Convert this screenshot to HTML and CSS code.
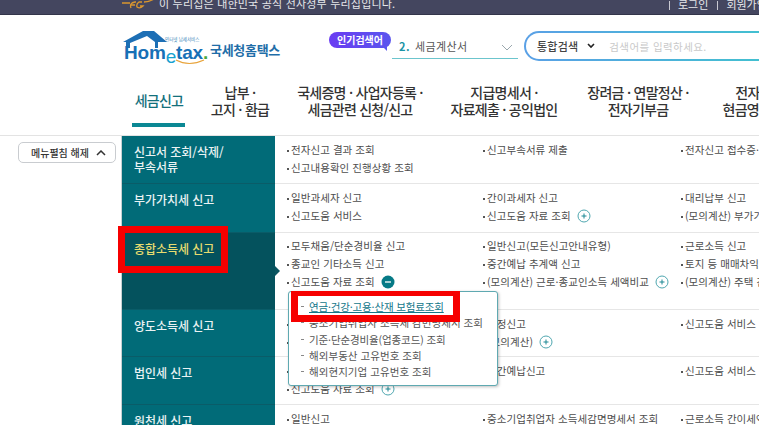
FILE: index.html
```html
<!DOCTYPE html>
<html lang="ko">
<head>
<meta charset="utf-8">
<title>홈택스</title>
<link rel="stylesheet" href="styles.css">
</head>
<body>
<div class="page">
  <div class="topbar">
    <svg class="eg" width="32" height="10" viewBox="0 0 32 10"><path d="M0 4H8M22 3Q27 3 32 0M9 9Q7 4 13 3H14M8.500 6H13M20 3H17Q14 5 15 8Q18 10 21 7H18" fill="none" stroke="#d9962f" stroke-width="1.300"/></svg>
    <span class="notice">이 누리집은 대한민국 공식 전자정부 누리집입니다.</span>
    <span class="toplinks"><a>로그인</a><a>회원가입</a></span>
  </div>
  <header class="head">
    <div class="logo">
      <svg class="house" width="46" height="17" viewBox="0 0 46 17"><path d="M0 11 20 0H31L44 11H35V17H32V11L24 5 7 12V17H3V11Z" fill="#1d6fb5"/></svg>
      <span class="logo-small">인터넷 납세서비스</span>
      <span class="logo-word">Hom<span class="logo-e">e</span>tax<span class="logo-dot">.</span></span>
      <svg class="swoosh" width="30" height="6" viewBox="0 0 30 6"><path d="M1 1Q14 8 29 1" fill="none" stroke="#e8a33a" stroke-width="1.200"/></svg>
      <span class="logo-ko">국세청홈택스</span>
    </div>
    <div class="popular">인기검색어</div>
    <div class="rank"><b>2.</b><span>세금계산서</span>
      <svg class="rank-arrow" width="12" height="7" viewBox="0 0 12 7"><path d="M1 1 6 6 11 1" fill="none" stroke="#9aa7ad"/></svg>
    </div>
    <div class="search">
      <span class="search-in">
        <span class="scope">통합검색</span>
        <svg class="scope-arrow" width="8" height="6" viewBox="0 0 8 6"><path d="M1 1 4 4 7 1" fill="none" stroke="#222" stroke-width="1.600"/></svg>
        <span class="ph">검색어를 입력하세요.</span>
      </span>
    </div>
  </header>
  <nav class="nav">
    <a class="tab w1 on">세금신고</a>
    <a class="tab w2">납부 ·<br>고지 · 환급</a>
    <a class="tab w3">국세증명 · 사업자등록 ·<br>세금관련 신청/신고</a>
    <a class="tab w4">지급명세서 ·<br>자료제출 · 공익법인</a>
    <a class="tab w5">장려금 · 연말정산 ·<br>전자기부금</a>
    <a class="tab w6">전자(세금)계산서<br>현금영수증 · 신용카드</a>
  </nav>
  <main class="body">
    <aside class="side">
      <button class="fold">메뉴펼침 해제
        <svg width="10" height="6" viewBox="0 0 10 6"><path d="M1 5 5 1 9 5" fill="none" stroke="#333" stroke-width="1.500"/></svg>
      </button>
    </aside>
    <section class="table">
      <div class="row r1">
        <h3 class="label two">신고서 조회/삭제/<br>부속서류</h3>
        <ul class="cells">
          <li>전자신고 결과 조회</li><li>신고부속서류 제출</li><li>전자신고 접수증·납부서 조회</li>
          <li>신고내용확인 진행상황 조회</li>
        </ul>
      </div>
      <div class="row r2">
        <h3 class="label">부가가치세 신고</h3>
        <ul class="cells">
          <li>일반과세자 신고</li><li>간이과세자 신고</li><li>대리납부 신고</li>
          <li>신고도움 서비스</li><li>신고도움 자료 조회<svg class="ico" viewBox="0 0 14 14"><use href="#plus"/></svg></li><li>(모의계산) 부가가치세</li>
        </ul>
      </div>
      <div class="row r3 active">
        <h3 class="label">종합소득세 신고</h3>
        <i class="pointer"></i>
        <ul class="cells">
          <li>모두채움/단순경비율 신고</li><li>일반신고(모든신고안내유형)</li><li>근로소득 신고</li>
          <li>종교인 기타소득 신고</li><li>중간예납 추계액 신고</li><li>토지 등 매매차익 신고</li>
          <li>신고도움 자료 조회<svg class="ico" viewBox="0 0 14 14"><circle cx="7" cy="7" r="6.500" fill="#067a86"/><path d="M4 7H10" stroke="#fff" stroke-width="1.300"/></svg></li><li>(모의계산) 근로·종교인소득 세액비교<svg class="ico" viewBox="0 0 14 14"><use href="#plus"/></svg></li><li>(모의계산) 주택 간주임대료</li>
        </ul>
      </div>
      <div class="row r4">
        <h3 class="label">양도소득세 신고</h3>
        <ul class="cells">
          <li>예정신고</li><li>확정신고</li><li>신고도움 서비스</li>
          <li>주식등 양도</li><li>(모의계산)<svg class="ico" viewBox="0 0 14 14"><use href="#plus"/></svg></li>
        </ul>
      </div>
      <div class="row r5">
        <h3 class="label">법인세 신고</h3>
        <ul class="cells">
          <li>정기신고</li><li>중간예납신고</li><li>신고도움 서비스</li>
          <li>신고도움 자료 조회<svg class="ico" viewBox="0 0 14 14"><use href="#plus"/></svg></li>
        </ul>
      </div>
      <div class="row r6">
        <h3 class="label">원천세 신고</h3>
        <ul class="cells">
          <li>일반신고</li><li>중소기업취업자 소득세감면명세서 조회</li><li>근로소득 간이세액표</li>
        </ul>
      </div>
    </section>
    <div class="popup">
      <a class="pop-link">연금·건강·고용·산재 보험료조회</a>
      <a>중소기업취업자 소득세 감면명세서 조회</a>
      <a class="tight">기준·단순경비율(업종코드) 조회</a>
      <a>해외부동산 고유번호 조회</a>
      <a>해외현지기업 고유번호 조회</a>
    </div>
    <div class="mark mark-side"></div>
    <div class="mark mark-pop"></div>
  </main>
  <svg class="defs" width="0" height="0"><symbol id="plus" viewBox="0 0 14 14"><circle cx="7" cy="7" r="6" fill="#fff" stroke="#4fa7b0"/><path d="M4.500 7H9.500M7 4.500V9.500" stroke="#1b8793"/></symbol></svg>
</div>
</body>
</html>
```
FILE: styles.css
```css
* { box-sizing: border-box; }
html, body { margin: 0; padding: 0; background: #fff; }
body { font-family: "Noto Sans CJK KR", "Noto Sans", sans-serif; color: #444; overflow: hidden; }
a { color: inherit; text-decoration: none; }
ul { list-style: none; margin: 0; padding: 0; }
h3 { margin: 0; }
.page { position: relative; width: 759px; height: 425px; overflow: hidden; background: #fff; }
.defs { position: absolute; }

.topbar { height: 15px; background: #44465f; border-bottom: 1px solid #33354a; display: flex; align-items: flex-end; padding-left: 122px; overflow: hidden; color: #e6e6ea; font-size: 11px; line-height: 14px; }
.eg { flex: none; margin-bottom: 5px; }
.notice { margin-left: 5px; margin-bottom: 4px; letter-spacing: .2px; white-space: nowrap; }
.toplinks { margin-left: auto; display: flex; margin-bottom: 4px; white-space: nowrap; width: 90px; flex: none; }
.toplinks a { border-left: 1px solid #c9c9d2; padding-left: 8px; margin-right: 9px; height: 9px; line-height: 6px; }
.toplinks a + a { flex: none; }

.head { position: relative; height: 68px; display: flex; align-items: flex-start; padding: 17px 0 0 122px; }
.logo { position: relative; width: 207px; height: 34px; flex: none; }
.house { position: absolute; left: 1px; top: -1px; }
.logo-small { position: absolute; left: 43px; top: 4px; font-size: 4.500px; line-height: 6px; color: #3a86b8; white-space: nowrap; }
.logo-word { position: absolute; left: 2px; top: 10px; font: 700 19px/22px "Liberation Sans", sans-serif; letter-spacing: -.2px; color: #1770b6; white-space: nowrap; }
.logo-e { color: #16a0cf; position: relative; top: 4px; font-weight: 400; }
.logo-dot { color: #4aa83c; }
.swoosh { position: absolute; left: 53px; top: 27px; }
.logo-ko { position: absolute; left: 88px; top: 9px; font-size: 13px; line-height: 18px; font-weight: 700; color: #1f6ea8; letter-spacing: -.3px; white-space: nowrap; }
.popular { position: relative; flex: none; width: 62px; height: 16px; border-radius: 8px; background: linear-gradient(90deg, #6a3df2, #5a55ee); color: #fff; font-size: 10px; line-height: 15px; font-weight: 700; text-align: center; white-space: nowrap; }
.popular::after { content: ""; position: absolute; right: 4px; bottom: -3px; border-left: 4px solid transparent; border-top: 4px solid #5a55ee; }
.rank { flex: none; width: 126px; height: 23px; margin: 4px 0 0 1px; padding: 1px 0 0 7px; border-bottom: 1px solid #6cc5cd; display: flex; align-items: flex-start; font-size: 11px; line-height: 18px; letter-spacing: .4px; color: #555; }
.rank b { color: #1b94a6; margin-right: 5px; }
.rank-arrow { margin: 7px 0 0 auto; margin-right: 5px; }
.search { flex: none; width: 240px; height: 30px; margin: -1px 0 0 6px; padding: 2px 0 2px 2px; border-radius: 15px 0 0 15px; background: linear-gradient(90deg, #5aa0e6, #42c0d0); }
.search-in { display: flex; align-items: center; height: 26px; padding-left: 11px; background: #fff; border-radius: 13px 0 0 13px; font-size: 10.500px; white-space: nowrap; overflow: hidden; }
.scope { color: #444; font-weight: 500; font-size: 11px; letter-spacing: .2px; }
.scope-arrow { margin-left: 9px; }
.ph { margin-left: 14px; color: #c9c9c9; letter-spacing: .42px; }

.nav { height: 52px; display: flex; padding-left: 122px; overflow: hidden; }
.tab { flex: none; height: 52px; text-align: center; font-size: 14px; line-height: 17px; letter-spacing: -.75px; color: #333; padding-top: 1px; white-space: nowrap; font-weight: 500; }
.w1 { width: 74px; }
.w2 { width: 88px; }
.w3 { width: 152px; }
.w4 { width: 136px; }
.w5 { width: 132px; }
.w6 { width: 156px; }
.on { color: #13707c; padding-top: 9px; position: relative; }
.on::after { content: ""; position: absolute; left: 10px; top: 40px; width: 53px; height: 4px; background: #0b8894; }

.body { position: relative; height: 290px; display: flex; border-top: 1px solid #e3e3e3; overflow: hidden; }
.side { width: 121px; flex: none; padding: 6px 0 0 18px; }
.fold { width: 98px; height: 21px; display: flex; align-items: center; justify-content: center; gap: 7px; padding: 0 0 0 3px; background: #fff; border: 1px solid #c9ccd0; border-radius: 5px; font: 500 10px/14px "Noto Sans CJK KR", sans-serif; color: #333; }
.table { flex: 1; min-width: 0; border-left: 1px solid #c9d0d2; }
.row { position: relative; display: flex; border-bottom: 1px solid #e6e6e6; }
.r1 { height: 48px; }
.r2 { height: 49px; }
.r3 { height: 77px; }
.r4 { height: 47px; }
.r5 { height: 48px; }
.r6 { height: 48px; border-bottom: 0; }
.label { width: 153px; flex: none; background: #016b78; border-bottom: 1px solid #0a5c68; margin-bottom: -1px; padding: 8px 0 0 12px; color: #eaf2f3; font-size: 12px; line-height: 16px; font-weight: 500; letter-spacing: -.05px; white-space: nowrap; }
.r1 .label { line-height: 15px; }
.active .label { background: #04525d; color: #e7dc70; }
.pointer { position: absolute; left: 153px; top: 33px; border-left: 5px solid #0b5560; border-top: 5px solid transparent; border-bottom: 5px solid transparent; }
.cells { flex: 1; min-width: 0; display: grid; grid-template-columns: 196px 198px 200px; grid-auto-rows: 18px; padding: 5px 0 0 12px; overflow: hidden; align-content: start; }
.r3 .cells { padding-top: 4px; }
.cells li { position: relative; padding-left: 4px; font-size: 10.500px; line-height: 18px; letter-spacing: .06px; white-space: nowrap; color: #4d4d4d; }
.cells li::before { content: ""; position: absolute; left: 0; top: 9px; width: 1.500px; height: 1.500px; background: #555; }
.ico { width: 14px; height: 14px; margin-left: 6px; vertical-align: -3px; }

.popup { position: absolute; left: 288px; top: 155px; width: 210px; height: 95px; padding: 7px 0 0 20px; background: #fff; border: 1px solid #5fa9b1; border-radius: 3px; box-shadow: 1px 1px 3px rgba(0,0,0,.25); font-size: 10.500px; line-height: 16.300px; color: #555; white-space: nowrap; letter-spacing: .05px; }
.popup a { display: block; position: relative; }
.popup a::before { content: ""; position: absolute; left: -8px; top: 7px; width: 3px; height: 1px; background: #888; }
.popup .pop-link { color: #13778a; text-decoration: underline; letter-spacing: -.15px; }
.popup .tight { letter-spacing: -.12px; }

.mark { position: absolute; border: 7px solid #f60000; }
.mark-side { left: 118px; top: 90px; width: 110px; height: 47px; }
.mark-pop { left: 291px; top: 155px; width: 169px; height: 31px; border-top-width: 5px; }
```
